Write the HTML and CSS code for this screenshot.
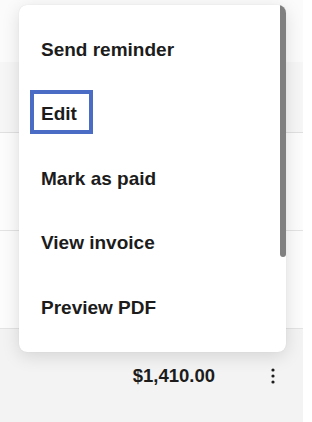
FILE: index.html
```html
<!DOCTYPE html>
<html lang="en">
<head>
  <meta charset="UTF-8" />
  <meta name="viewport" content="width=device-width, initial-scale=1.0"/>
  <title>Invoices</title>
  <link rel="stylesheet" href="styles.css">
</head>
<body>
  <div class="page">
    <div class="toolbar"></div>
    <div class="table-head"></div>
    <div class="row"></div>
    <div class="row"></div>
    <div class="row hovered">
      <span class="amount">$1,410.00</span>
      <button class="kebab" aria-label="More actions">
        <svg viewBox="0 0 4 16" width="4" height="16"><circle cx="2" cy="2" r="1.6"/><circle cx="2" cy="8" r="1.6"/><circle cx="2" cy="14" r="1.6"/></svg>
      </button>
    </div>
  </div>

  <!-- Row actions menu -->
  <div class="menu" role="menu">
    <div class="menu-item"><span>Send reminder</span></div>
    <div class="menu-item"><span class="focused">Edit</span></div>
    <div class="menu-item"><span>Mark as paid</span></div>
    <div class="menu-item"><span>View invoice</span></div>
    <div class="menu-item"><span>Preview PDF</span></div>
    <div class="scroll-thumb"></div>
  </div>
</body>
</html>
```

FILE: styles.css
```css
body {
  margin: 0;
  background: white;
  color: #1c1c1c;
  font-family: 'Liberation Sans', Arial, sans-serif;
}

.page {
  width: 303px;
}

.toolbar {
  height: 62px;
  background: #fbfbfb;
}

.table-head {
  height: 70px;
  background: #f6f6f6;
  border-bottom: 1px solid #e0e0e0;
}

.row {
  height: 97px;
  background: #fcfcfc;
  border-bottom: 1px solid #e3e3e3;
  display: flex;
  align-items: center;
  justify-content: flex-end;
}

.row.hovered {
  height: 93px;
  background: #f3f3f3;
  border-bottom: none;
  padding-right: 28px;
  gap: 56px;
}

.amount {
  font-weight: bold;
  font-size: 18.5px;
}

.kebab {
  background: none;
  border: none;
  padding: 0;
  display: flex;
}

.kebab svg {
  fill: #1c1c1c;
}

/* Menu */
.menu {
  position: absolute;
  top: 5px;
  left: 19px;
  width: 267px;
  height: 323px;
  padding: 12px 0;
  background: white;
  border-radius: 8px;
  box-shadow: 0 4px 18px rgba(0, 0, 0, 0.13), 0 0 1px rgba(0, 0, 0, 0.12);
  overflow: hidden;
}

.scroll-thumb {
  position: absolute;
  top: 0;
  right: 0;
  width: 6px;
  height: 252px;
  background: #808080;
  border-radius: 0 0 3px 3px;
}

.menu-item {
  box-sizing: border-box;
  height: 64.5px;
  display: flex;
  align-items: center;
  padding: 0 0 3.5px 11px;
  font-size: 19px;
  font-weight: bold;
  cursor: pointer;
}

.menu-item span {
  display: inline-block;
  line-height: 22px;
  padding: 9px 12px 5px 7px;
  border: 4px solid transparent;
}

.menu-item span.focused {
  border-color: #4a6cc5;
}
```
